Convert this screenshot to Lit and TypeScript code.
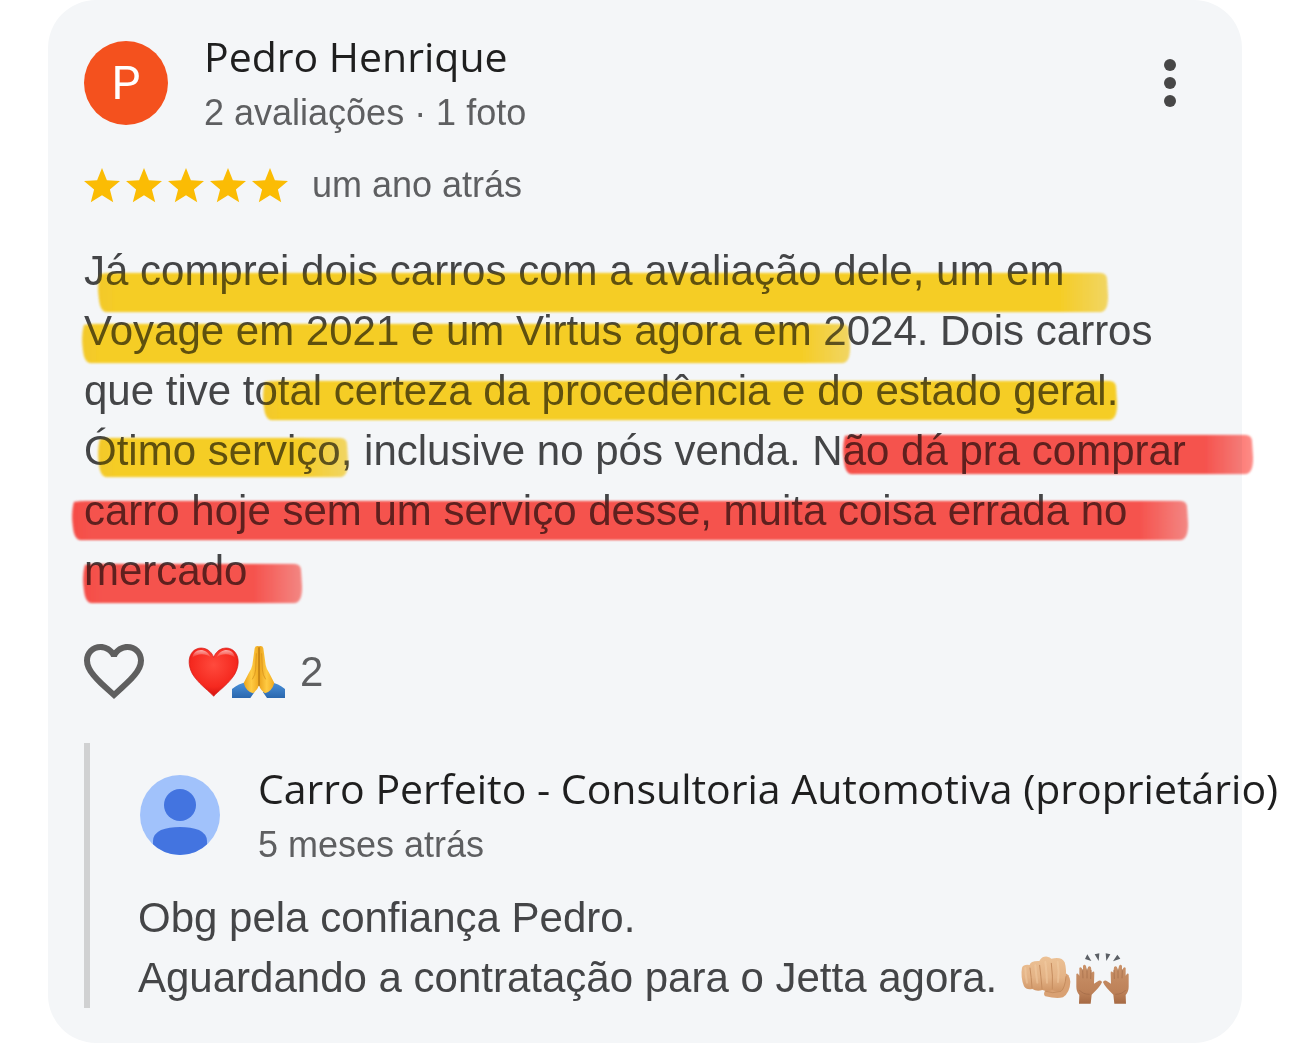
import { LitElement, html, css, svg } from "lit";
import { customElement } from "lit/decorators.js";

interface Stroke {
  x1: number;
  x2: number;
  y: number;
  tone: "yellow" | "red";
}

const STROKES: Stroke[] = [
  { x1: 98, x2: 1108, y: 32, tone: "yellow" },
  { x1: 82, x2: 850, y: 83, tone: "yellow" },
  { x1: 263, x2: 1117, y: 140, tone: "yellow" },
  { x1: 98, x2: 348, y: 197, tone: "yellow" },
  { x1: 843, x2: 1253, y: 194, tone: "red" },
  { x1: 72, x2: 1188, y: 260, tone: "red" },
  { x1: 83, x2: 302, y: 323, tone: "red" },
];

const TONES = {
  yellow: { edge: "#fdd02b", body: "#ffd427", fade: "#fbdc66" },
  red: { edge: "#ff504a", body: "#ff5650", fade: "#fd8c87" },
};

const REVIEW_LINES = [
  "Já comprei dois carros com a avaliação dele, um em",
  "Voyage em 2021 e um Virtus agora em 2024. Dois carros",
  "que tive total certeza da procedência e do estado geral.",
  "Ótimo serviço, inclusive no pós venda. Não dá pra comprar",
  "carro hoje sem um serviço desse, muita coisa errada no",
  "mercado",
];

const STAR = "M18 0l4.9 12.2 13.1.9-10.1 8.4 3.3 12.7L18 27.2 6.8 34.2l3.3-12.7L0 13.1l13.1-.9z";

@customElement("app-root")
export class AppRoot extends LitElement {
  static styles = css`
    :host {
      display: block;
      background: #fff;
      overflow: hidden;
      font-family: "Liberation Sans", Arial, Helvetica, sans-serif;
      color: #444547;
    }
    * {
      box-sizing: border-box;
    }
    p,
    h1,
    h2 {
      margin: 0;
      font-weight: 400;
    }
    svg {
      display: block;
      flex: none;
    }
    .card {
      margin: 0 48px 4px;
      padding: 28px 36px 35px;
      border-radius: 48px;
      background: #f4f6f8;
    }
    .head {
      display: flex;
      gap: 36px;
    }
    .avatar {
      flex: none;
      display: grid;
      place-items: center;
      width: 84px;
      height: 84px;
      margin-top: 13px;
      border-radius: 50%;
      background: #f4511e;
      color: #fff;
      font: 46px/84px Roboto, sans-serif;
    }
    .who {
      flex: 1;
      min-width: 0;
    }
    .name {
      font: 41px/56px "Open Sans", sans-serif;
      color: #1f1f1f;
      white-space: nowrap;
    }
    .meta {
      font-size: 36px;
      line-height: 58px;
      color: #5e5f61;
      white-space: nowrap;
    }
    button {
      padding: 0;
      border: 0;
      background: none;
      cursor: pointer;
    }
    .menu {
      align-self: flex-start;
      margin-top: 28px;
      margin-right: 24px;
    }
    .rating {
      display: flex;
      align-items: center;
      gap: 24px;
      margin: 14px 0 27px;
    }
    .stars {
      display: flex;
      gap: 6px;
    }
    .review {
      position: relative;
    }
    .text {
      font-size: 42px;
      line-height: 60px;
      white-space: nowrap;
    }
    .line {
      display: block;
    }
    .ink {
      position: absolute;
      top: 0;
      left: -84px;
      pointer-events: none;
      overflow: visible;
    }
    .multiply {
      mix-blend-mode: multiply;
    }
    .veil {
      opacity: 0.14;
    }
    .reactions {
      display: flex;
      align-items: center;
      margin: 34px 0 36px -6px;
      height: 72px;
    }
    .emojis {
      display: flex;
      margin: 2px 14px 0 38px;
    }
    .overlap {
      margin-left: -8px;
    }
    .count {
      padding-top: 2px;
      font-size: 42px;
      line-height: 56px;
      color: #5e5f61;
    }
    .reply {
      padding: 17px 0 0 48px;
      border-left: 6px solid #d0d1d2;
    }
    .replyhead {
      display: flex;
      gap: 37px;
      margin-bottom: 14px;
    }
    .face {
      margin: 14px 0 0 1px;
    }
    .withemoji {
      display: flex;
      align-items: center;
    }
    .fist {
      margin-left: 23px;
    }
  `;

  private stroke(s: Stroke, i: number) {
    const { x1: a, x2: b, y } = s;
    const t = TONES[s.tone];
    return svg`<linearGradient id="ink${i}" gradientUnits="userSpaceOnUse" x1=${a} x2=${b} y1="0" y2="0">
        <stop offset=${4 / (b - a)} stop-color=${t.edge} />
        <stop offset=${20 / (b - a)} stop-color=${t.body} />
        <stop offset=${1 - 48 / (b - a)} stop-color=${t.body} />
        <stop offset="1" stop-color=${i === 2 ? t.body : t.fade} />
      </linearGradient>
      <path fill="url(#ink${i})" d="M${a + 2} ${y + 1} Q${a + 8} ${y} ${a + 14} ${y} L${b - 8} ${y} Q${b - 1} ${y} ${b - 1} ${y + 7} L${b} ${y + 23} Q${b} ${y + 39} ${b - 8} ${y + 39} L${a + 8} ${y + 39} Q${a + 2} ${y + 38} ${a + 1} ${y + 26} Q${a - 1} ${y + 12} ${a + 2} ${y + 1}Z"/>`;
  }

  private strokes(mode: string) {
    return html`<svg class="ink ${mode}" width="1290" height="370" aria-hidden="true">
      <defs>
        <filter id="soft" x="-2%" y="-5%" width="104%" height="110%">
          <feGaussianBlur stdDeviation="1" />
        </filter>
      </defs>
      <g filter="url(#soft)">${STROKES.map((s, i) => this.stroke(s, i))}</g>
    </svg>`;
  }

  private heart() {
    return html`<svg width="51" height="54" viewBox="354 45 153 162" role="img" aria-label="Coração">
      <defs>
        <radialGradient id="hg" cx=".5" cy=".35" r=".65">
          <stop offset="0" stop-color="#ff4a3d" />
          <stop offset=".7" stop-color="#f5291f" />
          <stop offset="1" stop-color="#d3120f" />
        </radialGradient>
        <linearGradient id="hs" x2="0" y2="1">
          <stop offset="0" stop-color="#fff" stop-opacity=".6" />
          <stop offset="1" stop-color="#fff" stop-opacity="0" />
        </linearGradient>
      </defs>
      <path fill="url(#hg)" stroke="#d51a15" stroke-width="2" d="M431 199C418 184 394 168 374 142C354 115 352 83 368 65C386 46 420 52 431 82C442 52 476 46 494 65C510 83 508 115 488 142C468 168 444 184 431 199Z" />
      <path fill="url(#hs)" d="M367 84C370 55 408 50 422 82C408 70 382 68 367 84ZM495 84C492 55 454 50 440 82C454 70 480 68 495 84Z" />
    </svg>`;
  }

  private pray() {
    return html`<svg class="overlap" width="55" height="54" viewBox="483 45 165 162" role="img" aria-label="Mãos juntas">
      <defs>
        <linearGradient id="pg">
          <stop offset="0" stop-color="#eba31c" />
          <stop offset=".5" stop-color="#ffcb43" />
          <stop offset="1" stop-color="#f0a91f" />
        </linearGradient>
        <linearGradient id="sleeve" x2="0" y2="1">
          <stop offset="0" stop-color="#4a91da" />
          <stop offset="1" stop-color="#2a67ae" />
        </linearGradient>
      </defs>
      <path fill="url(#sleeve)" d="M486 177Q507 161 527 157L553 187L541 204H486ZM645 177Q624 161 604 157L579 187L591 204H645Z" />
      <path fill="url(#pg)" d="M567 49Q556 46 554 55L547 105Q544 119 536 130L521 159Q528 184 549 190Q563 180 567 166Z" />
      <path fill="url(#pg)" d="M567 49Q578 46 580 55L587 105Q590 119 598 130L613 159Q606 184 585 190Q571 180 567 166Z" />
      <path fill="none" stroke="#a5660c" stroke-width="3" d="M567 52V168" />
      <path fill="none" stroke="#d28b17" stroke-width="2" d="M559 70L557 118Q556 135 547 148M575 70L577 118Q578 135 587 148" />
    </svg>`;
  }

  private fist() {
    return html`<svg class="fist" width="52" height="54" viewBox="30 33 156 162" role="img" aria-label="Punho">
      <defs>
        <linearGradient id="skin" x2="0" y2="1">
          <stop offset="0" stop-color="#ecc195" />
          <stop offset=".6" stop-color="#e4b386" />
          <stop offset="1" stop-color="#cf9566" />
        </linearGradient>
      </defs>
      <path fill="#d9a173" d="M158 100Q178 96 181 125Q180 157 159 172Q140 177 106 169Q98 163 106 151Z" />
      <path fill="url(#skin)" d="M36 83Q41 72 59 75Q61 62 88 63Q96 48 112 50Q120 51 124 56Q155 48 164 67Q171 89 166 123Q164 144 157 151Q142 158 126 150Q113 156 97 150Q80 155 67 147Q49 151 42 139Q31 110 36 83Z" />
      <path fill="none" stroke="#c68d5f" stroke-width="3" stroke-linecap="round" d="M60 84Q64 112 66 143M89 76Q93 110 96 146M124 70Q129 108 127 147M107 154Q127 162 153 154Q165 144 168 110" />
      <path fill="none" stroke="#f3d0a8" stroke-width="6" stroke-linecap="round" opacity=".45" d="M46 84Q46 105 51 128M76 76Q78 103 82 128M106 66Q110 95 111 128M143 66Q148 94 144 126" />
    </svg>`;
  }

  private hands() {
    const hand = svg`<path d="M207 191L208 165Q199 155 199 140V103Q200 99 204 101L208 107V84Q211 79 215 84L219 92V78Q223 71 228 78L231 92L234 82Q238 75 243 82L245 98Q253 91 253 99L252 131L266 122Q275 120 276 127Q270 141 245 164L242 191Z" fill="url(#tan)"/>
      <path d="M218 88L219 115M231 86L231 115M243 90L242 117M208 150Q218 163 239 163" fill="none" stroke="#a06a47" stroke-width="2"/>`;
    return html`<svg width="60" height="54" viewBox="186 33 180 162" role="img" aria-label="Mãos para cima">
      <defs>
        <linearGradient id="tan" x2="0" y2="1">
          <stop offset="0" stop-color="#ca9269" />
          <stop offset=".7" stop-color="#bd8158" />
          <stop offset="1" stop-color="#a66a44" />
        </linearGradient>
      </defs>
      ${svg`<g>${hand}</g><g transform="translate(555 0) scale(-1 1)">${hand}</g>`}
      <path fill="#5c6066" d="M232 43L244 63L225 57ZM254 43L268 40L266 63ZM287 40L301 43L289 63ZM322 44L331 56L309 64Z" />
    </svg>`;
  }

  render() {
    return html`
      <article class="card">
        <header class="head">
          <div class="avatar" aria-hidden="true">P</div>
          <div class="who">
            <h1 class="name">Pedro Henrique</h1>
            <p class="meta">2 avaliações · 1 foto</p>
          </div>
          <button class="menu" type="button" aria-label="Mais opções">
            <svg width="48" height="54" viewBox="0 0 48 54" fill="#474747">
              <circle cx="36" cy="9" r="6" />
              <circle cx="36" cy="27" r="6" />
              <circle cx="36" cy="45" r="6" />
            </svg>
          </button>
        </header>

        <div class="rating">
          <div class="stars" role="img" aria-label="5 estrelas">
            ${[1, 2, 3, 4, 5].map(
              () => html`<svg width="36" height="35" viewBox="0 0 36 35"><path fill="#fbbc04" d=${STAR} /></svg>`
            )}
          </div>
          <span class="meta">um ano atrás</span>
        </div>

        <div class="review">
          <p class="text">${REVIEW_LINES.map((l) => html`<span class="line">${l}</span>`)}</p>
          ${this.strokes("multiply")} ${this.strokes("veil")}
        </div>

        <div class="reactions">
          <button type="button" aria-label="Curtir">
            <svg width="72" height="72" viewBox="0 0 24 24" fill="#5f5f5f">
              <path d="M16.5 3c-1.74 0-3.41.81-4.5 2.09C10.91 3.81 9.24 3 7.5 3 4.42 3 2 5.42 2 8.5c0 3.78 3.4 6.86 8.55 11.54L12 21.35l1.45-1.32C18.6 15.36 22 12.28 22 8.5 22 5.42 19.58 3 16.5 3zm-4.4 15.55l-.1.1-.1-.1C7.14 14.24 4 11.39 4 8.5 4 6.5 5.5 5 7.5 5c1.54 0 3.04.99 3.57 2.36h1.87C13.46 5.99 14.96 5 16.5 5c2 0 3.5 1.5 3.5 3.5 0 2.89-3.14 5.74-7.9 10.05z" />
            </svg>
          </button>
          <div class="emojis">${this.heart()}${this.pray()}</div>
          <span class="count">2</span>
        </div>

        <section class="reply">
          <div class="replyhead">
            <svg class="face" width="82" height="82" viewBox="0 0 82 82" aria-hidden="true">
              <defs>
                <clipPath id="disc"><circle cx="41" cy="41" r="40" /></clipPath>
              </defs>
              <circle cx="41" cy="41" r="40" fill="#a1c2fb" />
              <g fill="#4374e0" clip-path="url(#disc)">
                <circle cx="41" cy="31" r="16" />
                <path d="M14 67Q14 60 22 56Q30 53 41 53T60 56Q68 60 68 67V82H14Z" />
              </g>
            </svg>
            <div class="who">
              <h2 class="name">Carro Perfeito - Consultoria Automotiva (proprietário)</h2>
              <p class="meta">5 meses atrás</p>
            </div>
          </div>
          <p class="text">Obg pela confiança Pedro.</p>
          <p class="text withemoji">Aguardando a contratação para o Jetta agora.${this.fist()}${this.hands()}</p>
        </section>
      </article>
    `;
  }
}
